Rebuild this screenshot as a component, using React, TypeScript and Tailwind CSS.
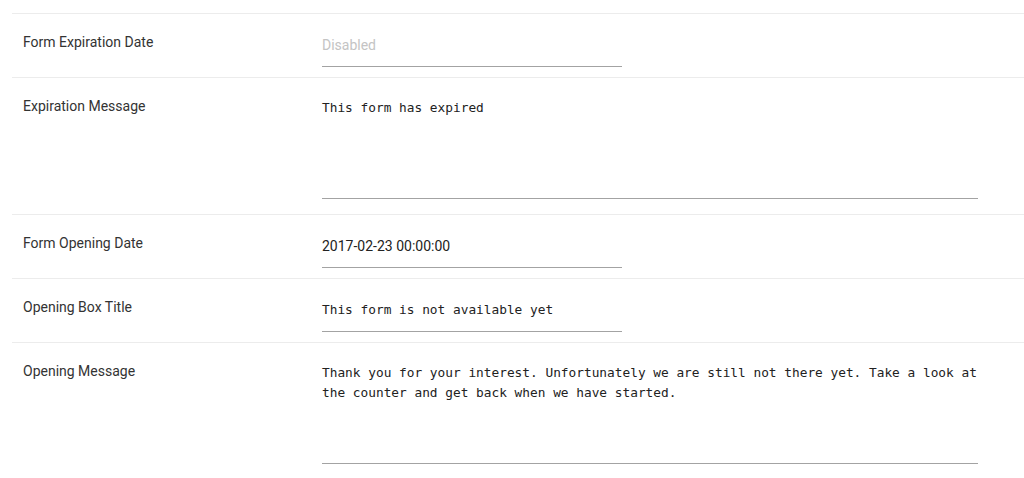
import React from 'react';

type Row = {
  id: string;
  label: string;
  value: string;
  kind: 'text' | 'mono' | 'textarea' | 'disabled';
};

const rows: Row[] = [
  { id: 'expiration-date', label: 'Form Expiration Date', value: 'Disabled', kind: 'disabled' },
  { id: 'expiration-message', label: 'Expiration Message', value: 'This form has expired', kind: 'textarea' },
  { id: 'opening-date', label: 'Form Opening Date', value: '2017-02-23 00:00:00', kind: 'text' },
  { id: 'opening-title', label: 'Opening Box Title', value: 'This form is not available yet', kind: 'mono' },
  {
    id: 'opening-message',
    label: 'Opening Message',
    value:
      'Thank you for your interest. Unfortunately we are still not there yet. Take a look at the counter and get back when we have started.',
    kind: 'textarea',
  },
];

const mono = "font-['DejaVu_Sans_Mono',monospace]";
const roboto = "font-['Roboto',sans-serif]";

function Field({ row }: { row: Row }) {
  if (row.kind === 'textarea') {
    return (
      <div className={`w-[656px] h-[121px] pt-[20px] border-b border-[#a3a3a3] ${mono} text-[12.8px] leading-[20px] text-[#222] whitespace-pre-wrap`}>
        {row.value}
      </div>
    );
  }
  return (
    <div
      className={`w-[300px] pt-[21px] pb-[11px] border-b border-[#a3a3a3] leading-[20px] ${
        row.kind === 'mono' ? `${mono} text-[12.8px]` : `${roboto} text-[14px]`
      } ${row.kind === 'disabled' ? 'text-[#c4c4c4]' : 'text-[#222]'}`}
    >
      {row.value}
    </div>
  );
}

export default function App() {
  return (
    <div className="bg-white w-[1024px] h-[478px] overflow-hidden pt-[13px] pl-[12px]">
      {rows.map((row, i) => (
        <div
          key={row.id}
          className={`flex border-t border-[#ececec] ${i === 1 ? 'pb-[15px]' : 'pb-[10px]'}`}
        >
          <div className={`w-[310px] shrink-0 pl-[11px] pt-[18px] ${roboto} text-[14px] leading-[20px] text-[#333]`}>
            {row.label}
          </div>
          <Field row={row} />
        </div>
      ))}
    </div>
  );
}
